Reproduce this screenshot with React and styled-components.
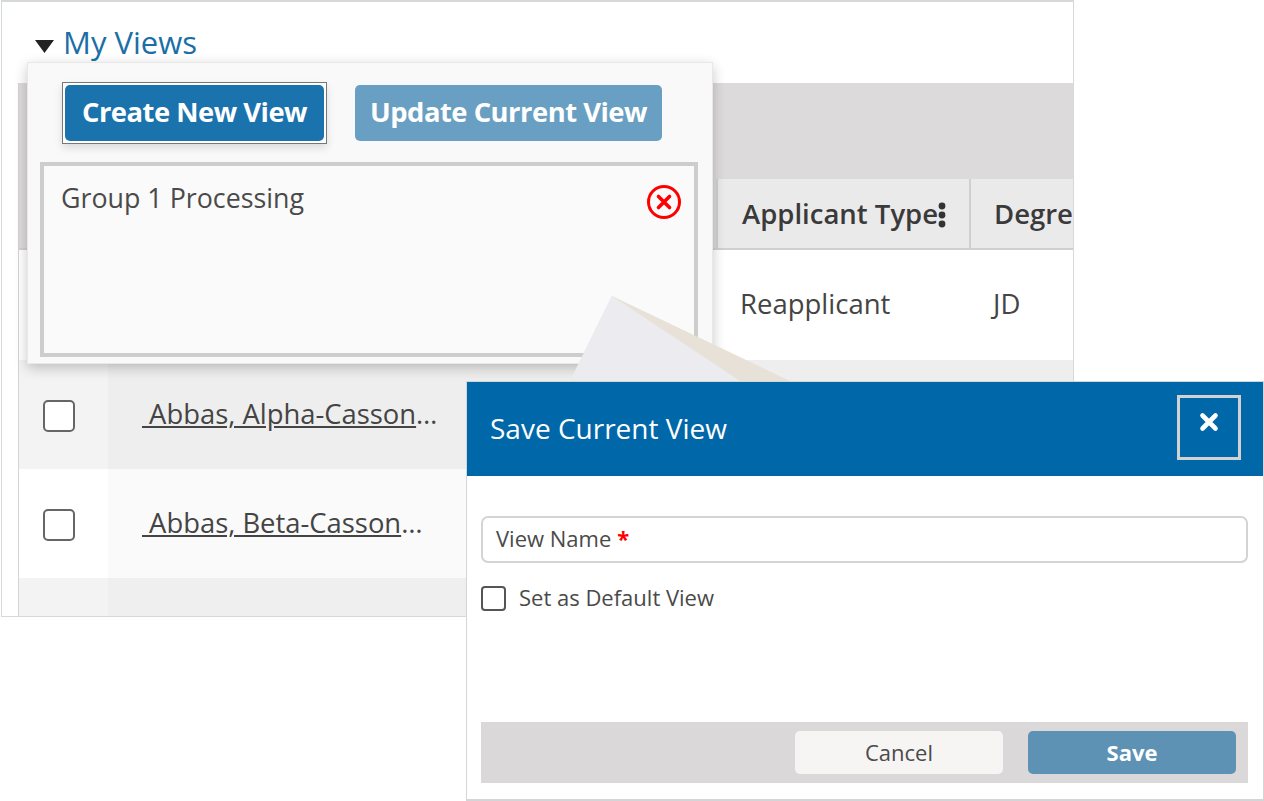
import React from "react";
import styled, { createGlobalStyle } from "styled-components";

const GlobalStyle = createGlobalStyle`
  html, body {
    margin: 0;
    padding: 0;
    background: #fff;
    font-family: "Open Sans", "Noto Sans", sans-serif;
    color: #444;
  }
  * { box-sizing: border-box; }
`;

const Canvas = styled.div`
  position: relative;
  width: 1264px;
  height: 801px;
  overflow: hidden;
  background: #fff;
`;

const Frame = styled.div`
  margin: 0 0 0 1px;
  width: 1073px;
  height: 617px;
  border: 1px solid #d6d9d9;
  border-top-width: 2px;
  padding: 19px 0 0 16px;
  overflow: hidden;
  background: #fff;
`;

const TitleRow = styled.div`
  height: 44px;
  margin-left: 17px;
  display: flex;
  align-items: center;
  gap: 9px;
`;

const Caret = styled.svg`
  width: 19px;
  height: 13px;
  margin-top: 6px;
  fill: #222;
`;

const ViewsLink = styled.span`
  font-size: 31px;
  line-height: 44px;
  margin-top: -2px;
  color: #1b6fa6;
`;

const Table = styled.div`
  margin-top: 18px;
  border-left: 1px solid #d4d4d4;
`;

const Toolbar = styled.div`
  height: 95px;
  background: #dcdadb;
`;

const HeaderRow = styled.div`
  display: flex;
  height: 72px;
  padding-left: 697px;
  background: #dcdadb;
  border-bottom: 2px solid #d0d0d0;
`;

const HeaderCell = styled.div`
  flex: none;
  display: flex;
  align-items: center;
  width: ${(p) => p.$width}px;
  padding-left: ${(p) => p.$pad}px;
  margin-top: 1px;
  background: #ebeaeb;
  border-left: 2px solid #d0d0d0;
  font-size: 27.5px;
  font-weight: 600;
  color: #3a3a3a;
  white-space: nowrap;
`;

const KebabIcon = styled.svg`
  flex: none;
  width: 8px;
  height: 26px;
  margin-top: 2px;
  fill: #333;
`;

const Row = styled.div`
  display: grid;
  grid-template-columns: 89px 609px 253px 1fr;
  height: ${(p) => p.$height}px;
  background: ${(p) => p.$bg};
`;

const CheckCell = styled.div`
  display: flex;
  align-items: center;
  padding: 2px 0 0 24px;
  background: ${(p) => p.$bg};
`;

const CheckBox = styled.span`
  display: block;
  width: 32px;
  height: 32px;
  background: #fff;
  border: 2px solid #666;
  border-radius: 5px;
`;

const NameCell = styled.div`
  display: flex;
  align-items: center;
  padding: 0 0 3px 34px;
  font-size: 27.4px;
  color: #444;
  white-space: pre;
`;

const NameLink = styled.span`
  text-decoration: underline;
`;

const TextCell = styled.div`
  display: flex;
  align-items: center;
  padding: 0 0 3px 23px;
  font-size: 27.5px;
  color: #444;
`;

const Popover = styled.div`
  position: absolute;
  left: 27px;
  top: 62px;
  width: 686px;
  height: 302px;
  padding: 19px 15px 0 12px;
  background: #f9f9f9;
  border: 1px solid #e8e8e8;
  box-shadow: 0 4px 12px rgba(0, 0, 0, 0.22);
`;

const ButtonRow = styled.div`
  display: flex;
  align-items: center;
  gap: 28px;
  height: 62px;
  padding-left: 22px;
`;

const FocusRing = styled.span`
  display: block;
  padding: 2px;
  background: #fff;
  border: 1px solid #777;
  box-shadow: 0 4px 8px rgba(0, 0, 0, 0.12);
`;

const ActionButton = styled.button`
  display: block;
  width: ${(p) => p.$width}px;
  height: 56px;
  padding: 0 0 3px;
  border: 0;
  border-radius: 5px;
  background: ${(p) => p.$bg};
  color: #fff;
  font-family: inherit;
  font-size: 27.4px;
  font-weight: 700;
  letter-spacing: -0.5px;
`;

const ViewList = styled.div`
  display: flex;
  justify-content: space-between;
  width: 658px;
  height: 195px;
  margin-top: 18px;
  padding: 14px 12px 0 17px;
  background: #fafafa;
  border: 4px solid #cdcdcd;
`;

const ViewName = styled.span`
  font-size: 26.8px;
  line-height: 36px;
  color: #4a4a4a;
`;

const RemoveIcon = styled.svg`
  width: 36px;
  height: 36px;
  margin-top: 4px;
`;

const Wedge = styled.svg`
  position: absolute;
  left: 560px;
  top: 290px;
  width: 240px;
  height: 95px;
`;

const Dialog = styled.div`
  position: absolute;
  left: 466px;
  top: 381px;
  width: 798px;
  height: 420px;
  display: flex;
  flex-direction: column;
  background: #fff;
  border: 1px solid #d2d6d6;
  border-bottom-width: 2px;
`;

const DialogHeader = styled.div`
  display: flex;
  align-items: center;
  justify-content: space-between;
  height: 94px;
  padding: 0 22px 4px 23px;
  background: #0067a8;
`;

const DialogTitle = styled.h2`
  margin: 0;
  padding-top: 2px;
  font-size: 28px;
  font-weight: 400;
  color: #fff;
`;

const CloseButton = styled.button`
  display: flex;
  align-items: center;
  justify-content: center;
  width: 64px;
  height: 65px;
  padding: 0 0 10px;
  background: transparent;
  border: 3px solid #d2d2d2;
`;

const DialogBody = styled.div`
  flex: 1;
  display: flex;
  flex-direction: column;
  padding: 40px 15px 16px 14px;
`;

const NameField = styled.div`
  display: flex;
  align-items: center;
  height: 47px;
  padding: 0 0 3px 13px;
  background: #fff;
  border: 2px solid #d4d4d4;
  border-radius: 7px;
  font-size: 22px;
  color: #4a4a4a;
`;

const Required = styled.span`
  margin-left: 6px;
  color: #f00;
  font-weight: 700;
`;

const DefaultRow = styled.label`
  display: flex;
  align-items: center;
  gap: 13px;
  margin-top: 22px;
  font-size: 22px;
  color: #4a4a4a;
`;

const DefaultText = styled.span`
  margin-top: -3px;
`;

const SmallCheck = styled.span`
  display: block;
  width: 25px;
  height: 25px;
  border: 2px solid #555;
  border-radius: 4px;
`;

const DialogFooter = styled.div`
  display: flex;
  justify-content: flex-end;
  align-items: center;
  gap: 25px;
  height: 61px;
  margin-top: auto;
  padding-right: 12px;
  background: #dad8d9;
`;

const FooterButton = styled.button`
  width: 208px;
  height: 43px;
  padding: 0 0 1px;
  border: 0;
  border-radius: 5px;
  background: ${(p) => p.$bg};
  color: ${(p) => p.$color};
  font-family: inherit;
  font-size: 22px;
  font-weight: ${(p) => p.$weight};
`;

const rows = [
  { height: 109, bg: "#eeeeee", side: "#f3f3f3", name: " Abbas, Alpha-Casson", check: true },
  { height: 109, bg: "#fafafa", side: "#ffffff", name: " Abbas, Beta-Casson", check: true },
  { height: 40, bg: "#efefef", side: "#f3f3f3" },
];

export default function App() {
  return (
    <Canvas>
      <GlobalStyle />
      <Frame>
        <TitleRow>
          <Caret viewBox="0 0 19 13">
            <path d="M0 0h19L9.5 13z" />
          </Caret>
          <ViewsLink>My Views</ViewsLink>
        </TitleRow>
        <Table>
          <Toolbar />
          <HeaderRow>
            <HeaderCell $width={253} $pad={24}>
              Applicant Type
              <KebabIcon viewBox="0 0 8 26">
                <circle cx="4" cy="4" r="3.4" />
                <circle cx="4" cy="13" r="3.4" />
                <circle cx="4" cy="22" r="3.4" />
              </KebabIcon>
            </HeaderCell>
            <HeaderCell $width={110} $pad={23}>Degree</HeaderCell>
          </HeaderRow>
          <Row $height={110} $bg="#ffffff">
            <span />
            <span />
            <TextCell>Reapplicant</TextCell>
            <TextCell>JD</TextCell>
          </Row>
          {rows.map((row, i) => (
            <Row key={i} $height={row.height} $bg={row.bg}>
              <CheckCell $bg={row.side}>{row.check && <CheckBox />}</CheckCell>
              <NameCell>
                {row.name && (
                  <>
                    <NameLink>{row.name}</NameLink>…
                  </>
                )}
              </NameCell>
            </Row>
          ))}
        </Table>
      </Frame>

      <Popover>
        <ButtonRow>
          <FocusRing>
            <ActionButton $width={259} $bg="#1a73ac">
              Create New View
            </ActionButton>
          </FocusRing>
          <ActionButton $width={307} $bg="#699fc2">
            Update Current View
          </ActionButton>
        </ButtonRow>
        <ViewList>
          <ViewName>Group 1 Processing</ViewName>
          <RemoveIcon viewBox="0 0 36 36">
            <circle cx="18" cy="18" r="15.5" fill="none" stroke="#f00" strokeWidth="3" />
            <path d="M12.5 12.5l11 11M23.5 12.5l-11 11" stroke="#f00" strokeWidth="3.6" strokeLinecap="round" />
          </RemoveIcon>
        </ViewList>
      </Popover>

      <Wedge viewBox="0 0 240 95">
        <path d="M52 6L230 91H10z" fill="#e8e1d7" />
        <path d="M52 6L180 91H10z" fill="#ecebf0" />
      </Wedge>

      <Dialog>
        <DialogHeader>
          <DialogTitle>Save Current View</DialogTitle>
          <CloseButton aria-label="Close">
            <svg width="20" height="20" viewBox="0 0 20 20">
              <path d="M3.5 3.5l13 13M16.5 3.5l-13 13" stroke="#fff" strokeWidth="4.6" strokeLinecap="round" />
            </svg>
          </CloseButton>
        </DialogHeader>
        <DialogBody>
          <NameField>
            View Name<Required>*</Required>
          </NameField>
          <DefaultRow>
            <SmallCheck />
            <DefaultText>Set as Default View</DefaultText>
          </DefaultRow>
          <DialogFooter>
            <FooterButton $bg="#f6f5f3" $color="#4a4a4a" $weight={400}>
              Cancel
            </FooterButton>
            <FooterButton $bg="#5d92b5" $color="#fff" $weight={700}>
              Save
            </FooterButton>
          </DialogFooter>
        </DialogBody>
      </Dialog>
    </Canvas>
  );
}
